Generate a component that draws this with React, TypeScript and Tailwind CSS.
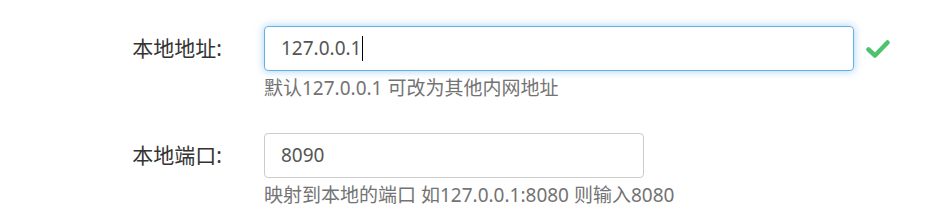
export default function App() {
  const font = { fontFamily: '"Noto Sans", "Noto Sans CJK SC", sans-serif' };
  return (
    <div className="w-[929px] h-[224px] bg-white pt-[26px]" style={font}>
      <div className="flex">
        <div className="w-[222px] h-[45px] flex items-center justify-end text-[21px] text-[#333]">本地地址:</div>
        <div className="ml-[42px] flex flex-col">
          <div className="flex items-center">
            <div className="w-[590px] h-[45px] rounded-[4px] border border-[#66afe9] shadow-[0_0_8px_rgba(102,175,233,0.6)] flex items-center pl-[16px] text-[19px] text-[#555]">
              127.0.0.1<span className="inline-block w-px h-[25px] bg-black ml-[1px]"></span>
            </div>
            <svg className="ml-[12px]" width="24" height="20" viewBox="0 0 24 20">
              <path d="M2.5 10.5 L9 16.5 L21.5 3.5" fill="none" stroke="#4fc26f" strokeWidth="4.5" strokeLinecap="round" strokeLinejoin="round" />
            </svg>
          </div>
          <div className="mt-[5px] text-[19px] leading-[24px] text-[#737373]">默认127.0.0.1 可改为其他内网地址</div>
        </div>
      </div>
      <div className="flex mt-[33px]">
        <div className="w-[222px] h-[45px] flex items-center justify-end text-[21px] text-[#333]">本地端口:</div>
        <div className="ml-[42px] flex flex-col">
          <div className="w-[380px] h-[45px] rounded-[4px] border border-[#ccc] flex items-center pl-[16px] text-[19px] text-[#555]">8090</div>
          <div className="mt-[5px] text-[19px] leading-[24px] text-[#737373]">映射到本地的端口 如127.0.0.1:8080 则输入8080</div>
        </div>
      </div>
    </div>
  );
}
